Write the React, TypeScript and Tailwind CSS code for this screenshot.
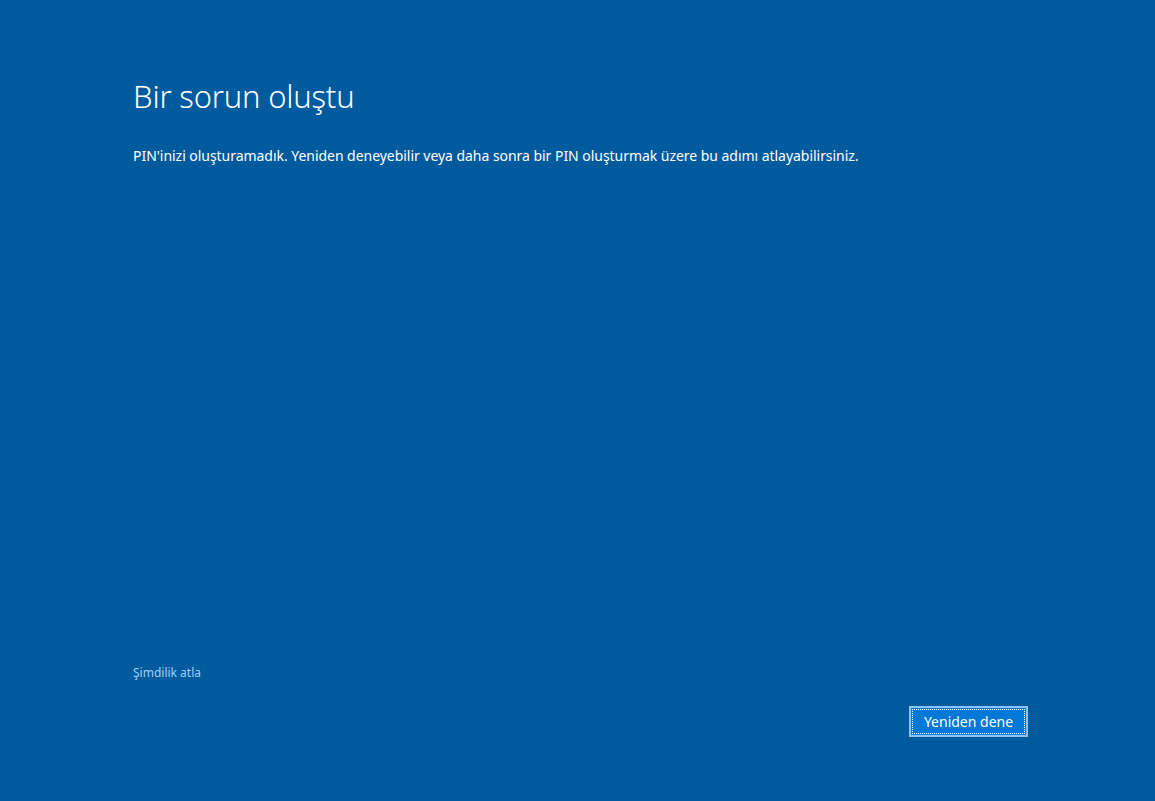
import React from 'react';

export default function App() {
    return (
        <div
            className="w-[1155px] h-[801px] bg-[#005a9e] text-white flex flex-col"
            style={{ fontFamily: '"Noto Sans", "Open Sans", sans-serif' }}
        >
            <div className="pl-[133px] pt-[74px]">
                <h1 className="text-[31px] font-light leading-[44px] tracking-[-0.2px]">Bir sorun oluştu</h1>
                <p className="mt-[28px] text-[14px] leading-[20px] tracking-[-0.04px]">
                    PIN'inizi oluşturamadık. Yeniden deneyebilir veya daha sonra bir PIN oluşturmak üzere bu adımı atlayabilirsiniz.
                </p>
            </div>

            <div className="flex-1" />

            {/* Skip link */}
            <div className="pl-[133px]">
                <a className="text-[12px] leading-[16px] text-[#9fd0f7] cursor-pointer">Şimdilik atla</a>
            </div>

            {/* Retry button */}
            <div className="flex justify-end pr-[127px] pt-[23px] pb-[64px]">
                <button className="w-[119px] h-[31px] border-2 border-[#8fc3ee] bg-[#0078d7] p-[1px]">
                    <span className="flex items-center justify-center w-full h-full border border-dotted border-white text-[14px] leading-none">
                        Yeniden dene
                    </span>
                </button>
            </div>
        </div>
    );
}
